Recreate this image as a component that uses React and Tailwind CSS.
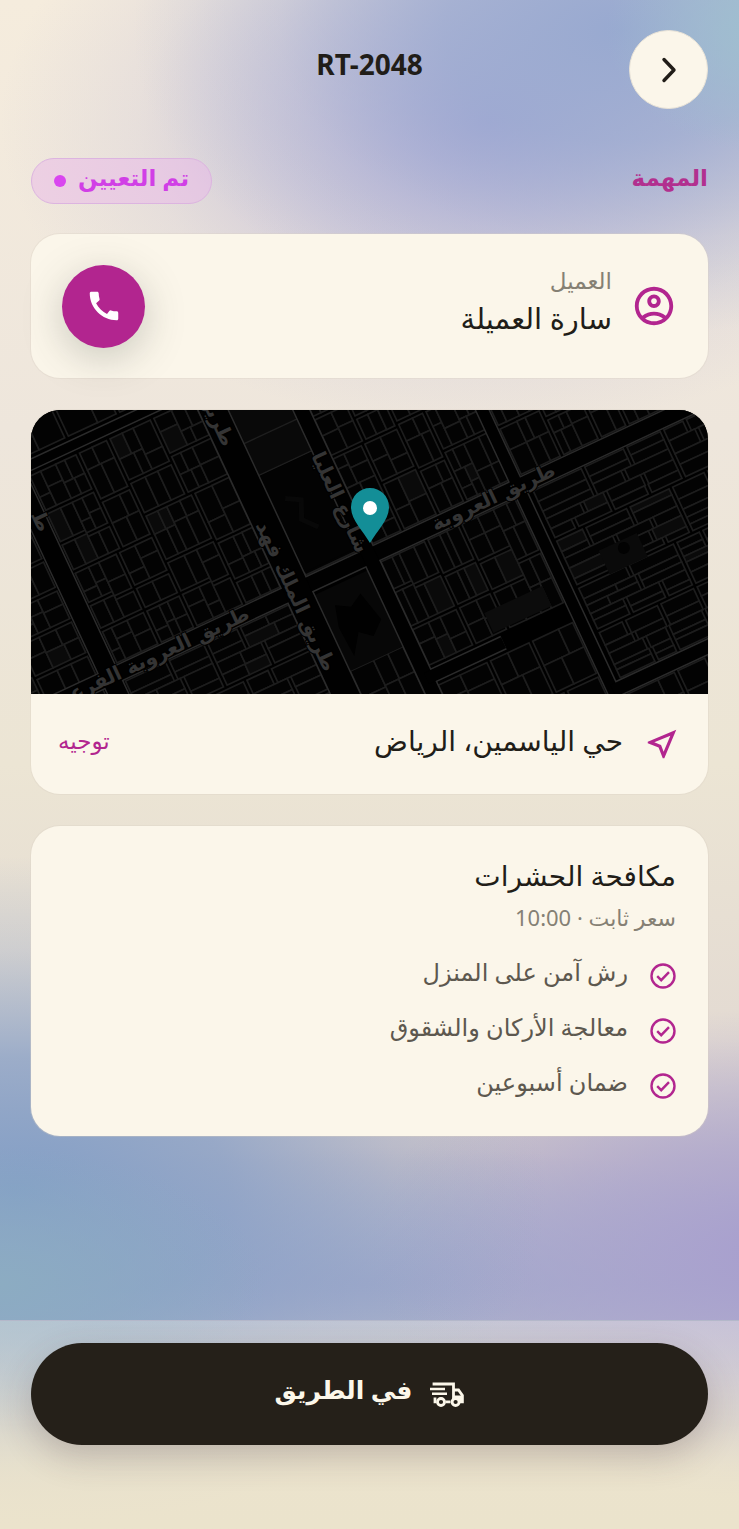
import React from "react";
import {
  MdCall,
  MdOutlineAccountCircle,
  MdOutlineNearMe,
} from "react-icons/md";

const features = ["رش آمن على المنزل", "معالجة الأركان والشقوق", "ضمان أسبوعين"];

/* Street blocks in road-aligned coordinates: [u0, v0, u1, v1, lot width, lot height, seed] */
const blocks = [
  [-340, -226, -218, 0, 20, 18, 3],
  [-340, 0, -218, 240, 26, 18, 5],
  [-194, -216, -14, -10, 13, 20, 7],
  [-194, 10, -14, 240, 30, 12, 11],
  [-194, -330, -14, -236, 28, 28, 13],
  [14, -300, 72, -10, 46, 46, 17],
  [14, 96, 72, 240, 18, 26, 19],
  [88, -330, 240, -10, 12, 19, 23],
  [88, 10, 236, 124, 12, 24, 29],
  [88, 146, 236, 300, 22, 22, 31],
  [252, -330, 520, -10, 12, 20, 37],
  [256, 10, 520, 216, 34, 9, 41],
  [256, 234, 520, 330, 24, 24, 43],
];

function random(seed) {
  let s = seed * 7919;
  return () => {
    s = (s * 16807 + 11) % 2147483647;
    return s / 2147483647;
  };
}

function split(x0, y0, x1, y1, lw, lh, rnd, out) {
  const w = x1 - x0;
  const h = y1 - y0;
  if (w < lw * 1.6 && h < lh * 1.6) {
    out.push([x0, y0, w, h, rnd()]);
    return;
  }
  const at = 0.35 + rnd() * 0.3;
  if (w / lw > h / lh) {
    const m = x0 + w * at;
    const g = w > 60 ? 2 : 0;
    split(x0, y0, m - g, y1, lw, lh, rnd, out);
    split(m + g, y0, x1, y1, lw, lh, rnd, out);
  } else {
    const m = y0 + h * at;
    const g = h > 60 ? 2 : 0;
    split(x0, y0, x1, m - g, lw, lh, rnd, out);
    split(x0, m + g, x1, y1, lw, lh, rnd, out);
  }
}

const lots = blocks.flatMap(([a, b, c, d, lw, lh, seed]) => {
  const out = [];
  split(a, b, c, d, lw, lh, random(seed), out);
  return out;
});

/* Main roads: [x1, y1, x2, y2, width] */
const roads = [
  [-340, 0, 520, 0, 15],
  [0, -330, 0, 330, 26],
  [80, -330, 80, 330, 14],
  [-206, -226, -206, 330, 18],
  [244, -330, 244, 330, 11],
  [-340, -226, -14, -226, 9],
  [244, 225, 520, 225, 13],
  [80, 135, 165, 135, 12],
];

function StreetMap() {
  return (
    <svg
      className="block h-[284px] w-full bg-black"
      viewBox="0 0 677 284"
      preserveAspectRatio="xMidYMid slice"
      role="img"
      aria-label="خريطة الموقع"
    >
      <g transform="translate(266 180) rotate(-25)">
        <g stroke="#1d1d1d" strokeWidth="1.7">
          {lots.map(([x, y, w, h, r], i) => (
            <rect key={i} x={x} y={y} width={w} height={h} fill={r > 0.95 ? "#0a0a0a" : "#030303"} />
          ))}
        </g>
        <rect x="14" y="-300" width="58" height="180" fill="#090909" />
        <path d="M14 -240H72M14 -195H72M14 -155H72M14 -120H72M42 -240V-195" stroke="#1e1e1e" strokeWidth="1.5" />
        <rect x="14" y="-119" width="58" height="106" fill="#030303" />
        <path d="M28 -88L42 -80L34 -62L46 -48" stroke="#080808" strokeWidth="5" fill="none" />
        <rect x="14" y="12" width="58" height="84" fill="#070707" />
        <path d="M28 30L42 38L56 30L64 62L50 74L38 64L24 84L22 52Z" fill="#010101" />
        <rect x="160" y="100" width="64" height="22" fill="#0c0c0c" />
        <rect x="290" y="92" width="42" height="26" fill="#0a0a0a" />
        <circle cx="314" cy="100" r="6" fill="#020202" />
        <g stroke="#2b2b2b">
          {roads.map(([a, b, c, d, w], i) => (
            <line key={i} x1={a} y1={b} x2={c} y2={d} strokeWidth={w + 3} />
          ))}
        </g>
        <g stroke="#010101">
          {roads.map(([a, b, c, d, w], i) => (
            <line key={i} x1={a} y1={b} x2={c} y2={d} strokeWidth={w} />
          ))}
        </g>
      </g>
      <g
        fill="#343434"
        stroke="#000"
        strokeWidth="2"
        paintOrder="stroke"
        fontFamily="DejaVu Sans, sans-serif"
        fontSize="20"
        fontWeight="bold"
        textAnchor="middle"
      >
        <text transform="translate(465 93) rotate(-25)">طريق العروبة</text>
        <text transform="translate(259 189) rotate(65)">طريق الملك فهد</text>
        <text transform="translate(303 95) rotate(65)">شارع العليا</text>
        <text transform="translate(180 12) rotate(65)">طريق</text>
        <text transform="translate(122 254) rotate(-25)">طريق العروبة الفرعي</text>
        <text transform="translate(4 114) rotate(65)">ط</text>
      </g>
      <path
        d="M339 133C332 121 320 110 320 97A19 19 0 0 1 358 97C358 110 346 121 339 133Z"
        fill="#138e97"
      />
      <circle cx="339" cy="98" r="7" fill="#fff" />
    </svg>
  );
}

function CheckIcon() {
  return (
    <svg className="size-[26px] shrink-0" viewBox="0 0 26 26" fill="none" stroke="#b2258f" aria-hidden="true">
      <circle cx="13" cy="13" r="11.5" strokeWidth="2.4" />
      <path d="M7.2 13.2L11.2 17.2L19 9.2" strokeWidth="2.4" />
    </svg>
  );
}

function TruckIcon() {
  return (
    <svg className="h-[26px] w-[34px] shrink-0" viewBox="0 0 34 26" fill="none" stroke="#fcf7ea" strokeWidth="2.8" aria-hidden="true">
      <path d="M4 4.5V3H23.5V20.5M23.5 9H28.5L32.4 14.5V20.8H30M20.5 20.8H15.5M6.5 20.8H5V16.5" />
      <path d="M24 14.5H32.5V20H24Z" fill="#fcf7ea" stroke="none" />
      <path d="M0 8H15M2 12.8H17" strokeWidth="2.6" />
      <circle cx="11" cy="21" r="3.5" fill="#252019" />
      <circle cx="25.6" cy="21" r="3.5" fill="#252019" />
    </svg>
  );
}

export default function App() {
  return (
    <div
      dir="rtl"
      className="flex min-h-screen flex-col bg-[#efe8d8] bg-[radial-gradient(ellipse_22%_8%_at_104%_2%,#9fc0cf_0%,transparent_100%),radial-gradient(ellipse_66%_20%_at_84%_2%,#98a9d0_0%,#98a9d0c0_36%,#98a9d040_70%,transparent_100%),radial-gradient(ellipse_66%_20%_at_66%_8%,#aeaad6_0%,#b0acd690_38%,#b4b0d630_72%,transparent_100%),radial-gradient(ellipse_36%_9%_at_0%_84%,#8cacc2_0%,transparent_100%),radial-gradient(ellipse_72%_22%_at_2%_78%,#839fc6_0%,#869fc6c0_40%,#869fc640_72%,transparent_100%),radial-gradient(ellipse_54%_16%_at_104%_82%,#a89fce_0%,#a9a1cea0_45%,transparent_100%),radial-gradient(ellipse_75%_9%_at_50%_84%,#a0a9ca_0%,transparent_100%),linear-gradient(#f5ecdd_0%,#eee6dc_28%,#ece5d4_50%,#e3dad2_68%,#c8c1c9_76%,#b3b9cc_84%,#ebe3cc_96%)] font-['Noto_Sans','DejaVu_Sans',sans-serif] text-[#211d18]"
    >
      <header className="grid grid-cols-[79px_1fr_79px] px-[31px] pt-[30px]">
        <button
          type="button"
          aria-label="رجوع"
          className="flex size-[79px] items-center justify-center rounded-full border border-[#e9e3d7] bg-[#fbf6ea]"
        >
          <svg className="size-8" viewBox="0 0 32 32" fill="none" stroke="currentColor" strokeWidth="3.4" strokeLinecap="round" strokeLinejoin="round" aria-hidden="true">
            <path d="M11 5.5L21 16L11 26.5" />
          </svg>
        </button>
        <h1 className="pt-4 text-center text-[28px] leading-9 font-bold" dir="ltr">
          RT-2048
        </h1>
      </header>

      <main className="flex flex-col px-[31px] pt-[49px]">
        <div className="mb-[30px] flex h-[46px] items-center justify-between">
          <h2 className="pb-2 text-[23px] leading-7 font-bold text-[#b2308f]">المهمة</h2>
          <span className="flex h-[46px] items-center gap-3 rounded-full border border-[#dcb4e0] bg-[#e9b8ea]/50 px-[22px] text-[23px] leading-7 font-bold text-[#d13fe6]">
            <span className="pb-2">تم التعيين</span>
            <span className="size-3 rounded-full bg-[#d946ef]" />
          </span>
        </div>

        <section className="mb-8 flex h-36 items-center rounded-[29px] bg-[#fbf6ea] px-[31px] shadow-[0_0_0_1px_#d8d0c450]">
          <MdOutlineAccountCircle className="size-[46px] shrink-0 text-[#b2258f]" aria-hidden="true" />
          <div className="mr-[19px] grow pb-2">
            <p className="text-[23px] leading-8 text-[#858074]">العميل</p>
            <p className="text-[29px] leading-11">سارة العميلة</p>
          </div>
          <button
            type="button"
            aria-label="اتصال"
            className="flex size-[83px] shrink-0 items-center justify-center rounded-full bg-[#b2258f] shadow-[0_10px_40px_rgba(60,70,60,0.26)]"
          >
            <MdCall className="size-[38px] text-white" />
          </button>
        </section>

        <section className="mb-8 overflow-hidden rounded-[29px] bg-[#fbf6ea] shadow-[0_0_0_1px_#d8d0c450]">
          <StreetMap />
          <div className="flex h-[100px] items-center px-[27px]">
            <MdOutlineNearMe className="size-[38px] shrink-0 text-[#b2258f]" aria-hidden="true" />
            <p className="mr-5 grow pb-2 text-[28px] leading-10">حي الياسمين، الرياض</p>
            <a href="#directions" className="pb-2 text-[23px] leading-8 text-[#b2258f]">
              توجيه
            </a>
          </div>
        </section>

        <section className="rounded-[29px] bg-[#fbf6ea] px-[32px] pt-[29px] pb-6 shadow-[0_0_0_1px_#d8d0c450]">
          <h3 className="text-[28px] leading-10">مكافحة الحشرات</h3>
          <p className="mt-[6px] mb-[17px] text-[22px] leading-8 text-[#858074]">سعر ثابت · 10:00</p>
          <ul className="flex flex-col gap-[3px]">
            {features.map((text) => (
              <li key={text} className="flex h-[52px] items-center gap-[22px]">
                <CheckIcon />
                <span className="pb-2 text-[24px] leading-9 text-[#5d584f]">{text}</span>
              </li>
            ))}
          </ul>
        </section>
      </main>

      <footer className="mt-auto border-t border-[#b4b8ca] bg-linear-to-b from-[#fcf7ea]/35 via-[#ece4cf]/50 to-[#ebe3cc] px-[31px] pt-[22px] pb-[84px]">
        <button
          type="button"
          className="flex h-[102px] w-full items-center justify-center gap-[18px] rounded-full bg-[#252019] text-[25px] font-bold text-[#fcf7ea] shadow-[0_12px_34px_rgba(70,50,60,0.24)]"
        >
          <TruckIcon />
          <span className="pb-2">في الطريق</span>
        </button>
      </footer>
    </div>
  );
}
